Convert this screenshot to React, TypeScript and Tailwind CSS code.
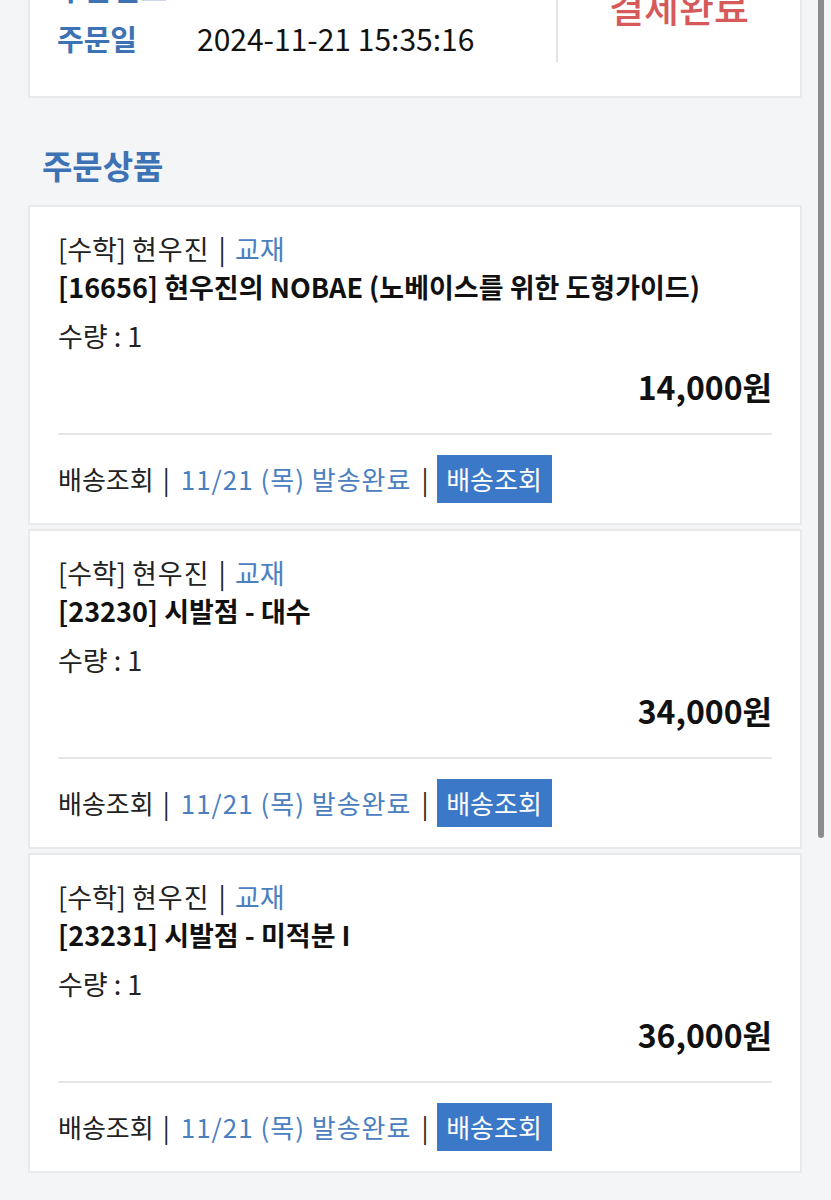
import React from 'react';

type OrderItem = {
  subject: string;
  teacher: string;
  kind: string;
  title: string;
  qty: number;
  price: string;
};

const items: OrderItem[] = [
  { subject: '수학', teacher: '현우진', kind: '교재', title: '[16656] 현우진의 NOBAE (노베이스를 위한 도형가이드)', qty: 1, price: '14,000' },
  { subject: '수학', teacher: '현우진', kind: '교재', title: '[23230] 시발점 - 대수', qty: 1, price: '34,000' },
  { subject: '수학', teacher: '현우진', kind: '교재', title: '[23231] 시발점 - 미적분 I', qty: 1, price: '36,000' },
];

const font = { fontFamily: '"Noto Sans CJK KR", "Noto Sans", sans-serif' };

const ProductCard: React.FC<{ item: OrderItem }> = ({ item }) => (
  <div className="bg-white border-2 border-[#e8e9eb] px-[28px] pt-[24px] pb-[20px]">
    <div className="text-[27px] leading-[36px] text-[#222]">
      [{item.subject}] <span className="tracking-[1px]">{item.teacher}</span> <span className="mx-[3px]">|</span> <span className="text-[#4a80bf]">{item.kind}</span>
    </div>
    <div className="mt-[2px] text-[27px] leading-[36px] font-semibold text-[#111]">{item.title}</div>
    <div className="mt-[13px] text-[27px] leading-[36px] text-[#222]">수량 : {item.qty}</div>
    <div className="mt-[12px] text-right text-[32px] leading-[40px] font-semibold text-[#111]">{item.price}원</div>
    <div className="mt-[27px] h-[2px] bg-[#e6e7e9]" />
    <div className="mt-[20px] flex items-center text-[26px] leading-[36px] text-[#222]">
      <span>배송조회</span>
      <span className="ml-[9px] mr-[11px]">|</span>
      <span className="text-[#4a80bf] tracking-[1px]">11/21 (목) 발송완료</span>
      <span className="ml-[10px] mr-[8px]">|</span>
      <button className="h-[48px] w-[115px] bg-[#3b78c8] text-white text-[26px]">배송조회</button>
    </div>
  </div>
);

export default function App() {
  return (
    <div className="relative min-h-[1200px] bg-[#f4f5f7] overflow-hidden" style={font}>
      <div className="pl-[28px] pr-[29px]">
        {/* 주문 정보 카드 (스크롤되어 윗부분이 잘림) */}
        <div className="-mt-[62px] bg-white border-2 border-[#e8e9eb] pt-[20px] pb-[34px] flex">
          <div className="flex-1 pl-[27px]">
            <div className="flex text-[30px] leading-[54px]">
              <span className="w-[140px] font-semibold text-[#3d72b4]">주문번호</span>
              <span className="text-[#111]">2024112115351600</span>
            </div>
            <div className="flex text-[30px] leading-[48px]">
              <span className="w-[140px] font-semibold text-[#3d72b4] text-[29px]">주문일</span>
              <span className="text-[#111]">2024-11-21 15:35:16</span>
            </div>
          </div>
          <div className="w-[244px] -mt-[20px] border-l-2 border-[#e3e4e6] flex items-center justify-center">
            <span className="text-[38px] font-medium text-[#d65a5a] mt-[8px]">결제완료</span>
          </div>
        </div>

        <h2 className="mt-[45px] pl-[14px] text-[33px] leading-[44px] font-bold text-[#3d72b4]">주문상품</h2>

        <div className="mt-[18px] flex flex-col gap-[4px]">
          {items.map((item, i) => (
            <ProductCard key={i} item={item} />
          ))}
        </div>
      </div>

      {/* 스크롤바 */}
      <div className="absolute left-[818px] top-0 w-[6px] h-[838px] rounded-b-full bg-[#8c8c8c]" />
    </div>
  );
}
